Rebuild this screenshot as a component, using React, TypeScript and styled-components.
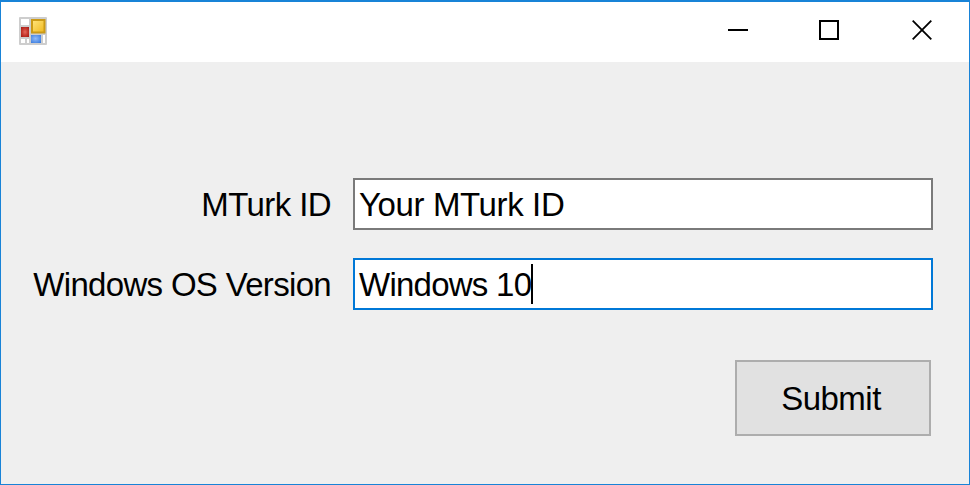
import React from 'react';
import styled, { createGlobalStyle } from 'styled-components';

const Global = createGlobalStyle`
  *{box-sizing:border-box}
  body{margin:0;font-family:"Liberation Sans",Arial,sans-serif;color:#000}
`;
const Window = styled.main`
  width:970px;height:485px;background:#efefef;border:1px solid #1883d7;border-top-width:2px;
  display:flex;flex-direction:column;
`;
const TitleBar = styled.header`
  height:60px;background:#fff;display:flex;align-items:flex-start;justify-content:space-between;padding-left:17px;
`;
const AppIcon = styled.svg`width:30px;height:30px;margin-top:14px;`;
const Controls = styled.nav`display:flex;`;
const Control = styled.button<{ $width: number }>`
  width:${p => p.$width}px;height:56px;padding:0 0 0 36px;border:0;background:none;display:flex;align-items:center;
`;
const Form = styled.form`
  padding:116px 36px 0 0;display:grid;grid-template-columns:330px 580px;column-gap:22px;row-gap:28px;
`;
const Label = styled.label<{ $tracking: number }>`
  height:52px;line-height:54px;font-size:33px;text-align:right;white-space:nowrap;
  letter-spacing:${p => p.$tracking}px;
`;
const Field = styled.div<{ $active?: boolean }>`
  height:52px;border:2px solid ${p => (p.$active ? '#0078d7' : '#7a7a7a')};background:#fff;
  display:flex;align-items:center;padding-left:4px;font-size:33px;white-space:nowrap;
`;
const FieldText = styled.span<{ $tracking: number }>`padding-top:2px;letter-spacing:${p => p.$tracking}px;`;
const Caret = styled.i`width:2px;height:40px;background:#000;`;
const Submit = styled.button`
  grid-column:2;justify-self:end;margin:22px 2px 0 0;width:196px;height:76px;padding:2px 4px 0 0;
  border:2px solid #adadad;background:#e1e1e1;font:33px "Liberation Sans",Arial,sans-serif;color:#000;
  letter-spacing:-0.5px;
`;

export default function App() {
  return (
    <>
      <Global />
      <Window>
        <TitleBar>
          <AppIcon viewBox="0 0 30 30">
            <defs>
              <linearGradient id="gold" x2="1" y2="1"><stop offset="0" stopColor="#ffe680" /><stop offset="1" stopColor="#f0b81c" /></linearGradient>
              <radialGradient id="red" cx=".5" cy=".5" r=".7"><stop offset="0" stopColor="#e5685c" /><stop offset=".5" stopColor="#c6372d" /><stop offset="1" stopColor="#a01a12" /></radialGradient>
              <radialGradient id="blue" cx=".45" cy=".45" r=".7"><stop offset="0" stopColor="#91bbfa" /><stop offset="1" stopColor="#397bdd" /></radialGradient>
            </defs>
            <rect x="1" y="1" width="28" height="28" rx="1" fill="#cdcdcd" />
            <rect x="3" y="3" width="8" height="6" fill="#fff" />
            <rect x="14" y="4" width="12.5" height="12.5" fill="url(#gold)" stroke="#cb9a16" strokeWidth="2" />
            <rect x="3" y="11" width="8" height="10" fill="url(#red)" />
            <rect x="13" y="19" width="10" height="8" fill="url(#blue)" />
            <rect x="3" y="23" width="4" height="4" fill="#fff" />
            <rect x="9" y="23" width="2" height="4" fill="#fff" />
            <rect x="25" y="19" width="2" height="8" fill="#fff" />
          </AppIcon>
          <Controls>
            <Control $width={91} type="button" aria-label="Minimize"><svg width="20" height="20"><path d="M0 10h20" stroke="#000" strokeWidth="2" /></svg></Control>
            <Control $width={93} type="button" aria-label="Maximize"><svg width="20" height="20"><rect x="1" y="1" width="18" height="18" fill="none" stroke="#000" strokeWidth="2" /></svg></Control>
            <Control $width={93} type="button" aria-label="Close"><svg width="20" height="20"><path d="M.7 .7l18.6 18.6M19.3 .7L.7 19.3" stroke="#000" strokeWidth="1.8" /></svg></Control>
          </Controls>
        </TitleBar>
        <Form>
          <Label $tracking={-0.6}>MTurk ID</Label>
          <Field><FieldText $tracking={-0.38}>Your MTurk ID</FieldText></Field>
          <Label $tracking={-0.68}>Windows OS Version</Label>
          <Field $active><FieldText $tracking={-0.75}>Windows 10</FieldText><Caret /></Field>
          <Submit type="button">Submit</Submit>
        </Form>
      </Window>
    </>
  );
}
